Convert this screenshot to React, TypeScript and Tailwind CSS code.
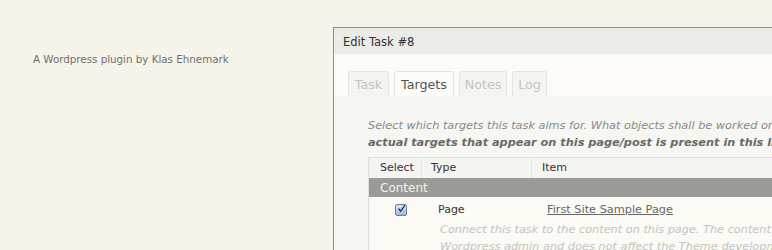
import React from "react";

const font = { fontFamily: '"DejaVu Sans", Verdana, sans-serif' };

function Tab({ label, active, w }: { label: string; active?: boolean; w: string }) {
  return (
    <div
      className={
        w +
        " h-[25px] pt-[2px] flex items-center justify-center border border-b-0 rounded-t-[3px] text-[12.7px] " +
        (active
          ? "bg-[#fbfbf8] border-[#e2e2de] text-[#555]"
          : "bg-[#f4f4f0] border-[#e4e4e0] text-[#c4c4c0]")
      }
    >
      {label}
    </div>
  );
}

function Checkbox() {
  return (
    <div className="w-[12px] h-[12px] rounded-[2px] border border-[#6a7f9e] bg-gradient-to-b from-[#dbe8f7] to-[#9cb8de] flex items-center justify-center">
      <svg width="12" height="12" viewBox="0 0 12 12" className="-mt-[3px] ml-[1px]">
        <path d="M2.5 6 L5 9 L10 1.5" fill="none" stroke="#1d2f57" strokeWidth="1.8" strokeLinecap="round" strokeLinejoin="round" />
      </svg>
    </div>
  );
}

export default function App() {
  return (
    <div className="w-[772px] h-[250px] bg-[#f6f4ea] flex overflow-hidden" style={font}>
      <div className="w-[333px] shrink-0 pl-[33px] pt-[52px] text-[10.3px] text-[#6e6e6e] whitespace-nowrap">
        A Wordpress plugin by Klas Ehnemark
      </div>
      <div className="flex-1 mt-[27px] border-l border-t border-[#8c8c88] flex flex-col min-w-0 overflow-hidden">
        <div className="h-[26px] bg-[#ebebe7] pl-[9px] pt-[3px] flex items-center text-[11.5px] text-[#333] whitespace-nowrap shrink-0">
          Edit Task #8
        </div>
        <div className="bg-[#fcfbf7] pt-[17px] pl-[14px] flex gap-[5px] shrink-0">
          <Tab label="Task" w="w-[41px]" />
          <Tab label="Targets" active w="w-[60px]" />
          <Tab label="Notes" w="w-[48px]" />
          <Tab label="Log" w="w-[35px]" />
        </div>
        <div className="flex-1 bg-[#f6f6f2] pl-[34px] pt-[21px] whitespace-nowrap">
          <div className="text-[11.3px] leading-[17px] italic text-[#8a8a86]">
            Select which targets this task aims for. What objects shall be worked on? Only the
          </div>
          <div className="text-[11.3px] leading-[17px] italic font-bold text-[#6a6a66]">
            actual targets that appear on this page/post is present in this list.
          </div>
          <div className="mt-[6px] border-t border-l border-[#dededa] text-[11px]">
            <div className="h-[20px] pt-[1px] flex items-center bg-[#f4f4f0] text-[#333]">
              <div className="w-[53px] pl-[11px] h-full flex items-center border-r border-[#e2e2de]">Select</div>
              <div className="w-[110px] pl-[9px] h-full flex items-center border-r border-[#e2e2de]">Type</div>
              <div className="pl-[10px]">Item</div>
            </div>
            <div className="h-[19px] bg-[#9a9a96] text-[#f2f2ee] text-[12px] pl-[11px] flex items-center">
              Content
            </div>
            <div className="bg-[#fbfaf5] pt-[6px]">
              <div className="flex items-center h-[14px]">
                <div className="w-[70px] pl-[26px]">
                  <Checkbox />
                </div>
                <div className="w-[109px] -ml-[1px] text-[#333]">Page</div>
                <div className="text-[11.3px] text-[#666] underline">First Site Sample Page</div>
              </div>
              <div className="pl-[71px] pt-[4px] text-[11.3px] leading-[17px] italic text-[#c4c4c0]">
                <div>Connect this task to the content on this page. The content is edited in the</div>
                <div>Wordpress admin and does not affect the Theme development.</div>
              </div>
            </div>
          </div>
        </div>
      </div>
    </div>
  );
}
